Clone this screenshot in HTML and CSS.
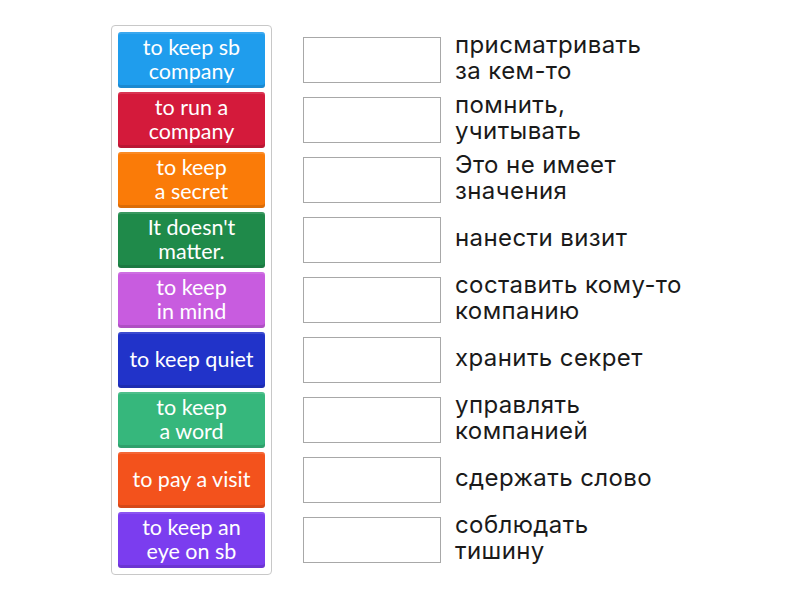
FILE: index.html
```html
<!DOCTYPE html>
<html>
<head>
<meta charset="utf-8">
<link rel="stylesheet" href="styles.css">
</head>
<body>
<div class="page">
  <div class="bank">
    <div class="tile c1">to keep sb<br>company</div>
    <div class="tile c2">to run a<br>company</div>
    <div class="tile c3">to keep<br>a secret</div>
    <div class="tile c4">It doesn't<br>matter.</div>
    <div class="tile c5">to keep<br>in mind</div>
    <div class="tile c6">to keep quiet</div>
    <div class="tile c7">to keep<br>a word</div>
    <div class="tile c8">to pay a visit</div>
    <div class="tile c9">to keep an<br>eye on sb</div>
  </div>
  <div class="rows">
    <div class="row"><div class="slot"></div><div class="def">присматривать<br>за кем-то</div></div>
    <div class="row"><div class="slot"></div><div class="def">помнить,<br>учитывать</div></div>
    <div class="row"><div class="slot"></div><div class="def">Это не имеет<br>значения</div></div>
    <div class="row"><div class="slot"></div><div class="def">нанести визит</div></div>
    <div class="row"><div class="slot"></div><div class="def">составить кому-то<br>компанию</div></div>
    <div class="row"><div class="slot"></div><div class="def">хранить секрет</div></div>
    <div class="row"><div class="slot"></div><div class="def">управлять<br>компанией</div></div>
    <div class="row"><div class="slot"></div><div class="def">сдержать слово</div></div>
    <div class="row"><div class="slot"></div><div class="def">соблюдать<br>тишину</div></div>
  </div>
</div>
</body>
</html>
```
FILE: styles.css
```css
html, body {
  margin: 0;
  padding: 0;
  background: #ffffff;
}
.page {
  display: flex;
  align-items: flex-start;
  padding: 25px 0 0 111px;
  gap: 31px;
}
.bank {
  width: 147px;
  padding: 6px;
  border: 1px solid #c8c8c8;
  border-radius: 4px;
  display: flex;
  flex-direction: column;
  gap: 4px;
}
.tile {
  height: 56px;
  padding-bottom: 2px;
  box-sizing: border-box;
  border-radius: 3px;
  display: flex;
  align-items: center;
  justify-content: center;
  text-align: center;
  color: #ffffff;
  font-family: Lato, "Open Sans", sans-serif;
  font-size: 21.5px;
  line-height: 24px;
  box-shadow: inset 0 -3px 0 rgba(0,0,0,0.12), inset 0 2px 0 rgba(255,255,255,0.12);
}
.c1 { background: #1f9ded; }
.c2 { background: #d41a3b; }
.c3 { background: #fa7b08; }
.c4 { background: #1f8a4a; }
.c5 { background: #c85cdf; }
.c6 { background: #2133c9; }
.c7 { background: #36b77c; }
.c8 { background: #f3521c; }
.c9 { background: #7b3def; }
.rows {
  padding-top: 7px;
  display: flex;
  flex-direction: column;
  gap: 4px;
}
.row {
  height: 56px;
  display: flex;
  align-items: center;
  gap: 14px;
}
.slot {
  width: 136px;
  height: 44px;
  border: 1px solid #a8a8a8;
  background: #fff;
  flex: none;
}
.def {
  font-family: Inter, Roboto, sans-serif;
  font-size: 24px;
  line-height: 26px;
  letter-spacing: 0.4px;
  color: #1a1a1a;
  padding-bottom: 4px;
}
```
